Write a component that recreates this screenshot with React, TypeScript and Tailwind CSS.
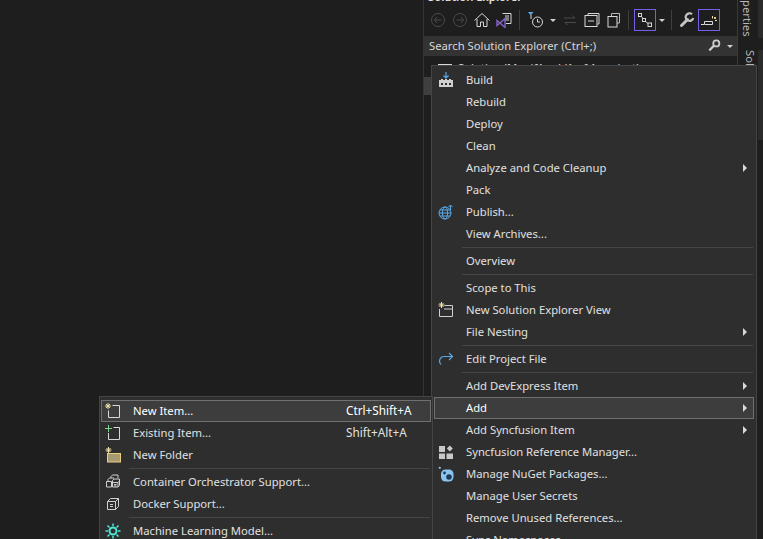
const font = { fontFamily: '"Noto Sans", "Open Sans", sans-serif' };

function Svg({ children, size = 16 }: { children: React.ReactNode; size?: number }) {
  return (
    <svg width={size} height={size} viewBox="0 0 16 16" fill="none" className="block shrink-0">
      {children}
    </svg>
  );
}

const Spark = ({ x = 3, y = 3 }: { x?: number; y?: number }) => (
  <g stroke="#f0e2a8" strokeWidth="1">
    <path d={`M${x} ${y - 3}V${y + 3}M${x - 3} ${y}H${x + 3}M${x - 2} ${y - 2}L${x + 2} ${y + 2}M${x + 2} ${y - 2}L${x - 2} ${y + 2}`} />
  </g>
);

const icons: Record<string, React.ReactNode> = {
  build: (
    <Svg>
      <path d="M1 8h2V7h2v1h2V7h2v1h2V7h2v1h2v7H1z" fill="#d0d0d0" />
      <path d="M3 11h2v2H3zM7 11h2v2H7zM11 11h2v2h-2z" fill="#2e2e2e" />
      <path d="M8 0v6M5.500 3.500L8 6l2.500-2.500" stroke="#5aa9e6" strokeWidth="1.200" />
    </Svg>
  ),
  publish: (
    <Svg>
      <circle cx="7" cy="9" r="6" stroke="#5aa9e6" />
      <ellipse cx="7" cy="9" rx="2.600" ry="6" stroke="#5aa9e6" />
      <path d="M1 9h12M2 6h10M2 12h10" stroke="#5aa9e6" />
      <path d="M12.500 6V1.500M10.500 3l2-2 2 2" stroke="#5aa9e6" />
    </Svg>
  ),
  view: (
    <Svg>
      <path d="M6.500 3.500h8v11H1.500V7" stroke="#d0d0d0" />
      <path d="M6 7h8.500" stroke="#d0d0d0" />
      <Spark x={3.500} y={3} />
    </Svg>
  ),
  edit: (
    <Svg>
      <path d="M14 5.500H6a4.500 4.500 0 0 0-4 6.500l1 1.500" stroke="#5aa9e6" strokeWidth="1.200" />
      <path d="M11 2l3.500 3.500L11 9" stroke="#5aa9e6" strokeWidth="1.200" />
    </Svg>
  ),
  sync: (
    <Svg>
      <path d="M1 2h6v6H1zM1 9.500h6v5.500H1zM8.500 9.500H15v5.500H8.500z" fill="#c8c8c8" />
      <path d="M11.800 1.500l3 3-3 3-3-3z" fill="#c8c8c8" />
    </Svg>
  ),
  nuget: (
    <Svg>
      <rect x="3" y="3.500" width="12.500" height="12" rx="4.500" fill="#8cc4f0" />
      <circle cx="11" cy="11" r="2.800" fill="#1f3a58" />
      <circle cx="6.500" cy="7" r="1.400" fill="#1f3a58" />
      <circle cx="1.800" cy="1.800" r="1.100" fill="#8cc4f0" />
    </Svg>
  ),
  newItem: (
    <Svg>
      <path d="M7.500 2.500h7v12H3.500V7.500" stroke="#d8d8d8" />
      <Spark x={3} y={3} />
    </Svg>
  ),
  existing: (
    <Svg>
      <path d="M8.500 2.500h6v12H3.500V8" stroke="#d8d8d8" />
      <path d="M3.500 0v7M0 3.500h7" stroke="#7fd08a" />
    </Svg>
  ),
  folder: (
    <Svg>
      <rect x="2.500" y="6.500" width="13" height="8.500" fill="#a89a70" stroke="#e8cf80" />
      <Spark x={3.500} y={3} />
    </Svg>
  ),
  containers: (
    <Svg>
      <path d="M6 4V2.500L7.500 1h5.500v3M3 7V5.500L4.500 4H9M1.500 7.500h5v5.500h-5zM7.500 6.500L9 5h5.500v6.500L13 13H7.500zM7.500 8.500h5.500V13M13 8.500l1.500-1.500" stroke="#d0d0d0" />
      <path d="M9 10.500h2.500M9 12h2.500" stroke="#d0d0d0" />
    </Svg>
  ),
  docker: (
    <Svg>
      <path d="M2.500 5.500L5.500 2.500h8v8l-3 3h-8zM2.500 5.500h8v8M10.500 5.500l3-3M5 8.500h3M5 10.500h3" stroke="#d0d0d0" />
    </Svg>
  ),
  ml: (
    <Svg>
      <circle cx="8" cy="8" r="3.500" stroke="#4fe6d4" strokeWidth="2" />
      <path d="M8 0.500v2.500M8 13v2.500M0.500 8H3M13 8h2.500M2.500 2.500l2 2M11.500 11.500l2 2M13.500 2.500l-2 2M4.500 11.500l-2 2" stroke="#4fe6d4" strokeWidth="1.500" />
    </Svg>
  ),
};

type Row = { t: string; icon?: string; sub?: boolean; sep?: boolean; sc?: string; hot?: boolean };

const main: Row[] = [
  { t: "Build", icon: "build" },
  { t: "Rebuild" },
  { t: "Deploy" },
  { t: "Clean" },
  { t: "Analyze and Code Cleanup", sub: true },
  { t: "Pack" },
  { t: "Publish...", icon: "publish" },
  { t: "View Archives..." },
  { t: "", sep: true },
  { t: "Overview" },
  { t: "", sep: true },
  { t: "Scope to This" },
  { t: "New Solution Explorer View", icon: "view" },
  { t: "File Nesting", sub: true },
  { t: "", sep: true },
  { t: "Edit Project File", icon: "edit" },
  { t: "", sep: true },
  { t: "Add DevExpress Item", sub: true },
  { t: "Add", sub: true, hot: true },
  { t: "Add Syncfusion Item", sub: true },
  { t: "Syncfusion Reference Manager...", icon: "sync" },
  { t: "Manage NuGet Packages...", icon: "nuget" },
  { t: "Manage User Secrets" },
  { t: "Remove Unused References..." },
  { t: "Sync Namespaces" },
];

const submenu: Row[] = [
  { t: "New Item...", icon: "newItem", sc: "Ctrl+Shift+A", hot: true },
  { t: "Existing Item...", icon: "existing", sc: "Shift+Alt+A" },
  { t: "New Folder", icon: "folder" },
  { t: "", sep: true },
  { t: "Container Orchestrator Support...", icon: "containers" },
  { t: "Docker Support...", icon: "docker" },
  { t: "", sep: true },
  { t: "Machine Learning Model...", icon: "ml" },
];

function MenuRow({ r }: { r: Row }) {
  if (r.sep) return <div className="h-[5px] flex items-center pl-[28px] pr-[1px]"><div className="h-px w-full bg-[#454545]" /></div>;
  return (
    <div className={`h-[22px] flex items-center text-[11.25px] border ${r.hot ? "bg-[#3d3d3d] border-[#707070] text-white" : "border-transparent text-[#e0e0e0]"}`}>
      <div className="w-[31px] shrink-0 pl-[3px]">{r.icon ? icons[r.icon] : null}</div>
      <span className="whitespace-nowrap">{r.t}</span>
      {r.sc ? <span className="absolute left-[246px] whitespace-nowrap text-[11.75px]">{r.sc}</span> : null}
      {r.sub ? <span className="ml-auto mr-[6px] w-0 h-0 border-y-[4px] border-y-transparent border-l-[4px] border-l-[#d8d8d8]" /> : null}
    </div>
  );
}

function Tb({ children, active, w = 22 }: { children: React.ReactNode; active?: boolean; w?: number }) {
  return (
    <div style={{ width: w }} className={`h-[22px] shrink-0 flex items-center justify-center ${active ? "border border-[#7160e8]" : ""}`}>
      {children}
    </div>
  );
}

const Caret = () => <span className="w-0 h-0 shrink-0 border-x-[3px] border-x-transparent border-t-[3px] border-t-[#d0d0d0]" />;
const Div = () => <div className="w-px h-[20px] bg-[#3f3f3f] shrink-0" />;

export default function App() {
  return (
    <div style={font} className="relative w-[763px] h-[539px] overflow-hidden bg-[#1e1e1e] flex justify-end">
      <div className="w-[314px] h-full border-l border-[#333333] shrink-0 flex flex-col">
        <div className="h-[5px] overflow-hidden relative text-[11.25px] text-[#e0e0e0] font-semibold">
          <span className="absolute left-[4px] -top-[11px] whitespace-nowrap">Solution Explorer</span>
        </div>
        <div className="h-[30px] flex items-center pl-[3px] shrink-0">
          <Tb><Svg><circle cx="8" cy="8" r="6.500" stroke="#4a4a4a" /><path d="M11.500 8h-7M7 5L4.500 8 7 11" stroke="#4a4a4a" /></Svg></Tb>
          <Tb><Svg><circle cx="8" cy="8" r="6.500" stroke="#4a4a4a" /><path d="M4.500 8h7M9 5l2.500 3L9 11" stroke="#4a4a4a" /></Svg></Tb>
          <Tb><Svg><path d="M.5 8.500L8 1.500l7.500 7M3 7v7.500h3.500V10h3v4.500H13V7" stroke="#d8d8d8" /></Svg></Tb>
          <Tb><Svg><path d="M6.500 1.500h8.500v10H10" stroke="#d8d8d8" /><path d="M9 4h4M9 6h4M9 8h4" stroke="#d8d8d8" /><path d="M1 8.500l3 2.500 5-4.500v9L4 11l-3 2.500z" stroke="#8661c5" strokeWidth="1.400" /></Svg></Tb>
          <div className="w-[4px]" />
          <Div />
          <div className="w-[7px]" />
          <Tb w={18}><Svg><path d="M0 0h5.500L2.750 3.500z" fill="#5aa9e6" /><circle cx="9.500" cy="10" r="5" stroke="#d8d8d8" /><path d="M9.500 7v3H12" stroke="#d8d8d8" /><path d="M3 3v4" stroke="#d8d8d8" /></Svg></Tb>
          <div className="w-[5px]" />
          <Caret />
          <div className="w-[3px]" />
          <Tb><Svg><path d="M2 6h11M10.500 3.500L13 6M14 10.500H3M5.500 13L3 10.500" stroke="#4a4a4a" /></Svg></Tb>
          <Tb><Svg><path d="M4 3V1.500h11V12h-1.500" stroke="#d8d8d8" /><rect x="1" y="3.500" width="12" height="11" stroke="#d8d8d8" /><path d="M4 9h6" stroke="#d8d8d8" /></Svg></Tb>
          <Tb><Svg><path d="M5.500 4V1.500h8V11H11" stroke="#b8b8b8" /><rect x="2" y="4.500" width="9" height="10.500" stroke="#d8d8d8" /></Svg></Tb>
          <div className="w-[3px]" />
          <Div />
          <div className="w-[5px]" />
          <Tb active><Svg><rect x="1.500" y="1.500" width="3" height="3" stroke="#d8d8d8" /><rect x="5.500" y="6.500" width="3" height="3" stroke="#d8d8d8" /><rect x="11" y="11" width="3.500" height="3.500" stroke="#d8d8d8" /><path d="M4.500 4.500l1.500 2M8.500 9.500l2.500 2" stroke="#d8d8d8" /></Svg></Tb>
          <div className="w-[3px]" />
          <Caret />
          <div className="w-[6px]" />
          <Div />
          <div className="w-[4px]" />
          <Tb><Svg><path d="M2.500 13.500l6-6" stroke="#c4c4c4" strokeWidth="3" strokeLinecap="round" /><path d="M13 2.200A3.800 3.800 0 1 0 14.200 6" stroke="#c4c4c4" strokeWidth="2.200" /></Svg></Tb>
          <Tb active><Svg><path d="M0 12.500h3M3.500 9.500h8v3h-8z" stroke="#d8d8d8" /><path d="M11.500 4v2.500M14 8.500h2" stroke="#f0e2a8" /><rect x="13" y="5" width="2" height="2" fill="#e8c878" /></Svg></Tb>
        </div>
        <div className="h-[20px] mt-[1px] shrink-0 bg-[#333333] flex items-center pl-[5px] pr-[4px] text-[11.25px] text-[#d8d8d8]">
          <span className="whitespace-nowrap">Search Solution Explorer (Ctrl+;)</span>
          <span className="ml-auto mr-[5px]">
            <Svg size={14}><circle cx="9.500" cy="5" r="3.500" stroke="#d0d0d0" strokeWidth="2" /><path d="M7 7.500L1.500 13" stroke="#d0d0d0" strokeWidth="2.500" /></Svg>
          </span>
          <Caret />
        </div>
        <div className="flex items-center pl-[14px] h-[24px] text-[11.25px] text-[#e0e0e0] whitespace-nowrap">
          <span className="w-[14px] h-[8px] border border-[#d8d8d8] mr-[6px]" />
          Solution 'ManifApp' (1 of 1 project)
        </div>
        <div className="h-[18px] mt-[-3px] w-[8px] bg-[#3f3f3f]" />
      </div>
      <div className="w-[26px] h-full shrink-0 bg-[#1e1e1e] border-l border-[#3a3a3a] flex text-[11.25px] text-[#b8b8b8]">
        <div className="w-[20px] pl-[1px] flex flex-col">
          <div className="h-[41px] relative overflow-hidden [writing-mode:vertical-rl] whitespace-nowrap flex items-end">
            <span className="leading-[16px]">perties</span>
          </div>
          <div className="mt-[9px] h-[16px] overflow-hidden [writing-mode:vertical-rl] whitespace-nowrap">
            <span className="leading-[16px]">Solution Explorer</span>
          </div>
        </div>
        <div className="w-[5px] flex flex-col">
          <div className="h-[38px] bg-[#2b2b2b]" />
          <div className="h-[12px]" />
          <div className="h-[90px] bg-[#2b2b2b]" />
        </div>
      </div>

      <div className="absolute left-[431px] top-[65px] w-[326px] h-[490px] bg-[#2e2e2e] border border-[#454545] pt-[3px] pl-[2px] pr-[2px]">
        {main.map((r, i) => <MenuRow key={i} r={r} />)}
      </div>

      <div className="absolute left-[99px] top-[396px] w-[334px] h-[160px] bg-[#2e2e2e] border border-[#454545] pt-[3px] px-[1px]">
        {submenu.map((r, i) => <MenuRow key={i} r={r} />)}
      </div>
    </div>
  );
}
